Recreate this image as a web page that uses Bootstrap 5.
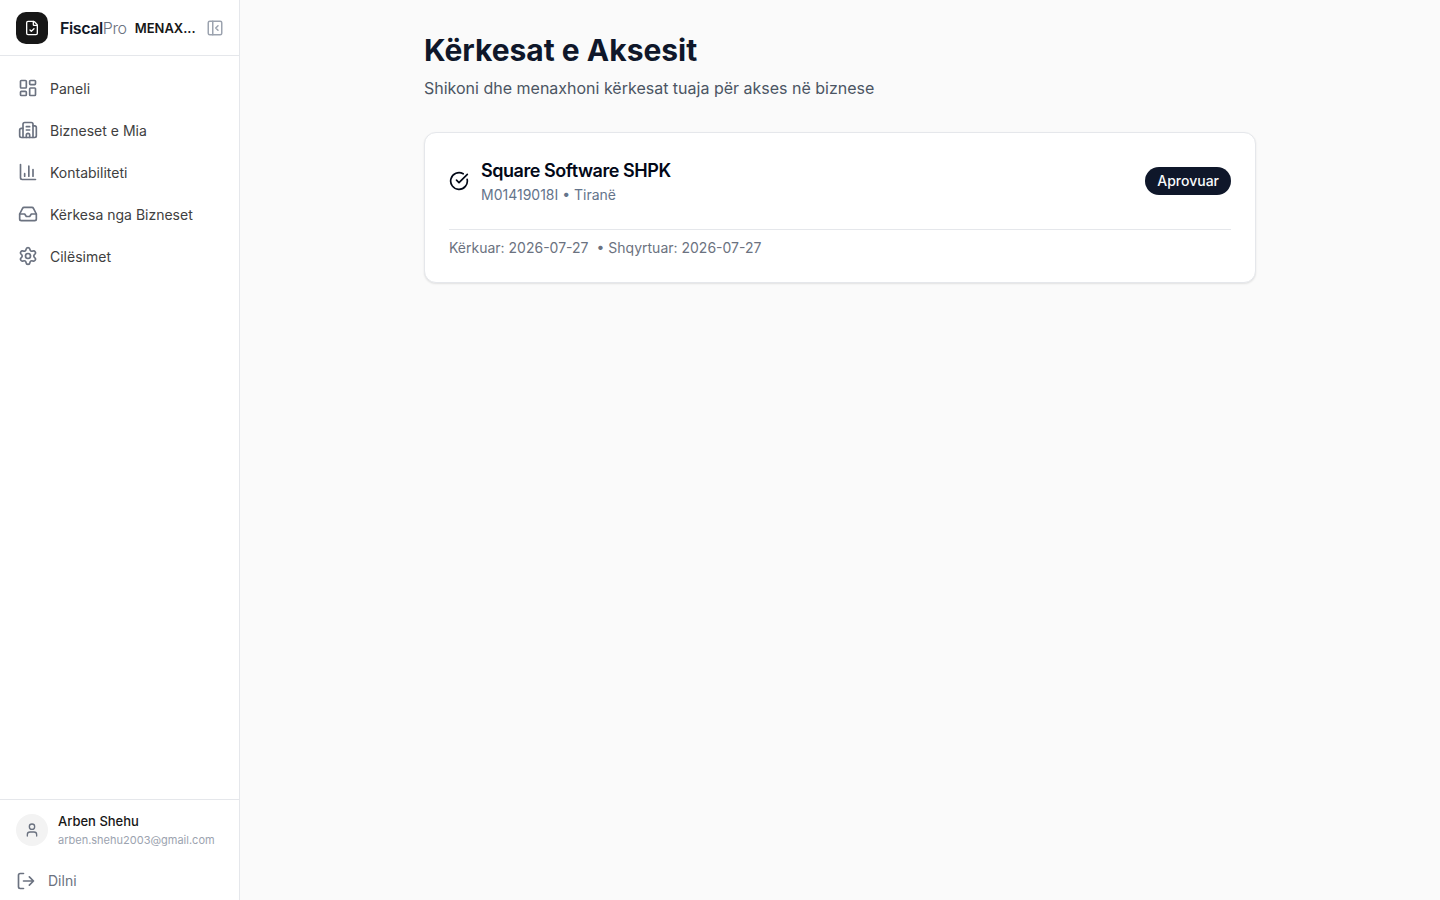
<!DOCTYPE html>
<html lang="sq">
<head>
<meta charset="utf-8">
<meta name="viewport" content="width=device-width, initial-scale=1">
<title>FiscalPro – Kërkesat e Aksesit</title>
<link href="https://cdn.jsdelivr.net/npm/bootstrap@5.3.0/dist/css/bootstrap.min.css" rel="stylesheet">
<style>
  body { font-family: Inter, "Liberation Sans", sans-serif; background: #fafafa; color: #020817; }
  svg { fill: none; stroke: currentColor; stroke-width: 2; stroke-linecap: round; stroke-linejoin: round; flex-shrink: 0; }
  .app-sidebar { width: 240px; height: 100vh; top: 0; background: #fff; border-right: 1px solid #e5e7eb; }
  .brand-bar { height: 56px; padding: 0 15px 0 16px; border-bottom: 1px solid #e5e7eb; }
  .brand-logo { width: 32px; height: 32px; border-radius: 10px; background: #171717; color: #fff; }
  .brand-name { font-size: 16px; line-height: 24px; font-weight: 600; color: #111827; letter-spacing: -0.025em; }
  .brand-name span { font-weight: 300; color: #6b7280; }
  .brand-role { font-size: 13px; line-height: 20px; font-weight: 600; color: #171717; }
  .collapse-btn { color: #9ca3af; }
  .side-nav { padding: 11px 8px; }
  .side-link { height: 42px; padding: 0 10px; gap: 12px; font-size: 14px; color: #404040; }
  .side-link svg { color: #6b7280; }
  .user-panel { border-top: 1px solid #e5e7eb; padding: 11px 15px 9px 16px; gap: 22px; }
  .user-row { gap: 10px; }
  .avatar { width: 32px; height: 32px; background: #f3f3f3; color: #6b7280; }
  .user-name { font-size: 13px; line-height: 20px; font-weight: 500; color: #171717; }
  .user-mail { font-size: 11px; line-height: 18px; color: #9ca3af; }
  .logout-btn { font-size: 14px; line-height: 20px; gap: 12px; color: #6b7280; }
  .page-wrap { max-width: 896px; padding: 32px; }
  .page-title { font-size: 30px; line-height: 36px; font-weight: 700; color: #0f172a; }
  .page-lead { font-size: 16px; line-height: 24px; color: #4b5563; margin-bottom: 32px; }
  .request-card { border: 1px solid #e5e7eb; border-radius: 12px; box-shadow: 0 1px 2px rgba(0, 0, 0, .1); padding: 24px; }
  .biz-name { font-size: 18px; line-height: 28px; font-weight: 600; letter-spacing: -0.025em; }
  .biz-meta { font-size: 14px; line-height: 20px; color: #64748b; }
  .status-pill { font-size: 14px; line-height: 20px; font-weight: 500; padding: 4px 12px; background: #0f172a; color: #f8fafc; }
  .request-dates { font-size: 14px; line-height: 20px; color: #6b7280; border-top: 1px solid #e5e7eb; }
</style>
</head>
<body>
<div class="d-flex align-items-start">
  <aside class="app-sidebar position-sticky d-flex flex-column flex-shrink-0">
    <div class="brand-bar d-flex align-items-center">
      <div class="brand-logo d-flex align-items-center justify-content-center flex-shrink-0 me-2">
        <svg width="16" height="16" viewBox="0 0 24 24"><path d="M6 22a2 2 0 0 1-2-2V4a2 2 0 0 1 2-2h8a2.4 2.4 0 0 1 1.704.706l3.588 3.588A2.4 2.4 0 0 1 20 8v12a2 2 0 0 1-2 2z"/><path d="M14 2v5a1 1 0 0 0 1 1h5"/><path d="m9 15 2 2 4-4"/></svg>
      </div>
      <div class="brand-name ms-1 me-2">Fiscal<span>Pro</span></div>
      <div class="brand-role text-nowrap me-auto">MENAX...</div>
      <button type="button" class="collapse-btn btn p-0 border-0 d-flex" aria-label="Mbyll menunë">
        <svg width="18" height="18" viewBox="0 0 24 24"><rect x="3" y="3" width="18" height="18" rx="2"/><path d="M9 3v18"/><path d="m16 15-3-3 3-3"/></svg>
      </button>
    </div>
    <nav class="side-nav flex-grow-1">
      <a href="#" class="side-link d-flex align-items-center text-decoration-none">
        <svg width="20" height="20" viewBox="0 0 24 24"><rect x="3" y="3" width="7" height="9" rx="1"/><rect x="14" y="3" width="7" height="5" rx="1"/><rect x="14" y="12" width="7" height="9" rx="1"/><rect x="3" y="16" width="7" height="5" rx="1"/></svg>Paneli</a>
      <a href="#" class="side-link d-flex align-items-center text-decoration-none">
        <svg width="20" height="20" viewBox="0 0 24 24"><path d="M10 12h4M10 8h4M14 21v-3a2 2 0 0 0-4 0v3"/><path d="M6 10H4a2 2 0 0 0-2 2v7a2 2 0 0 0 2 2h16a2 2 0 0 0 2-2V9a2 2 0 0 0-2-2h-2"/><path d="M6 21V5a2 2 0 0 1 2-2h8a2 2 0 0 1 2 2v16"/></svg>Bizneset e Mia</a>
      <a href="#" class="side-link d-flex align-items-center text-decoration-none">
        <svg width="20" height="20" viewBox="0 0 24 24"><path d="M3 3v16a2 2 0 0 0 2 2h16M18 17V9M13 17V5M8 17v-3"/></svg>Kontabiliteti</a>
      <a href="#" class="side-link d-flex align-items-center text-decoration-none">
        <svg width="20" height="20" viewBox="0 0 24 24"><path d="M22 12h-6l-2 3h-4l-2-3H2"/><path d="M5.45 5.11 2 12v6a2 2 0 0 0 2 2h16a2 2 0 0 0 2-2v-6l-3.45-6.89A2 2 0 0 0 16.76 4H7.24a2 2 0 0 0-1.79 1.11z"/></svg>Kërkesa nga Bizneset</a>
      <a href="#" class="side-link d-flex align-items-center text-decoration-none">
        <svg width="20" height="20" viewBox="0 0 24 24"><path d="M9.671 4.136a2.34 2.34 0 0 1 4.659 0 2.34 2.34 0 0 0 3.319 1.915 2.34 2.34 0 0 1 2.33 4.033 2.34 2.34 0 0 0 0 3.831 2.34 2.34 0 0 1-2.33 4.033 2.34 2.34 0 0 0-3.319 1.915 2.34 2.34 0 0 1-4.659 0 2.34 2.34 0 0 0-3.32-1.915 2.34 2.34 0 0 1-2.33-4.033 2.34 2.34 0 0 0 0-3.831A2.34 2.34 0 0 1 6.35 6.051a2.34 2.34 0 0 0 3.319-1.915"/><circle cx="12" cy="12" r="3"/></svg>Cilësimet</a>
    </nav>
    <div class="user-panel d-flex flex-column align-items-start">
      <div class="user-row d-flex align-items-center">
        <div class="avatar rounded-circle d-flex align-items-center justify-content-center flex-shrink-0">
          <svg width="16" height="16" viewBox="0 0 24 24"><path d="M19 21v-2a4 4 0 0 0-4-4H9a4 4 0 0 0-4 4v2"/><circle cx="12" cy="7" r="4"/></svg>
        </div>
        <div>
          <div class="user-name">Arben Shehu</div>
          <div class="user-mail">arben.shehu2003@gmail.com</div>
        </div>
      </div>
      <button type="button" class="logout-btn btn p-0 border-0 d-flex align-items-center">
        <svg width="20" height="20" viewBox="0 0 24 24"><path d="m16 17 5-5-5-5M21 12H9M9 21H5a2 2 0 0 1-2-2V5a2 2 0 0 1 2-2h4"/></svg>Dilni</button>
    </div>
  </aside>
  <main class="flex-grow-1">
    <div class="page-wrap mx-auto">
      <h1 class="page-title mb-2">Kërkesat e Aksesit</h1>
      <p class="page-lead">Shikoni dhe menaxhoni kërkesat tuaja për akses në biznese</p>
      <section class="request-card bg-white">
        <div class="d-flex align-items-center justify-content-between mb-4">
          <div class="d-flex align-items-center">
            <svg width="20" height="20" viewBox="0 0 24 24"><path d="M21.801 10A10 10 0 1 1 17 3.335"/><path d="m9 11 3 3L22 4"/></svg>
            <div class="ms-2 ps-1">
              <h2 class="biz-name mb-0">Square Software SHPK</h2>
              <div class="biz-meta">M01419018I • Tiranë</div>
            </div>
          </div>
          <span class="status-pill rounded-pill">Aprovuar</span>
        </div>
        <div class="request-dates pt-2"><span class="me-2">Kërkuar: 2026-07-27</span><span>• Shqyrtuar: 2026-07-27</span></div>
      </section>
    </div>
  </main>
</div>
<script src="https://cdn.jsdelivr.net/npm/bootstrap@5.3.0/dist/js/bootstrap.bundle.min.js"></script>
</body>
</html>
